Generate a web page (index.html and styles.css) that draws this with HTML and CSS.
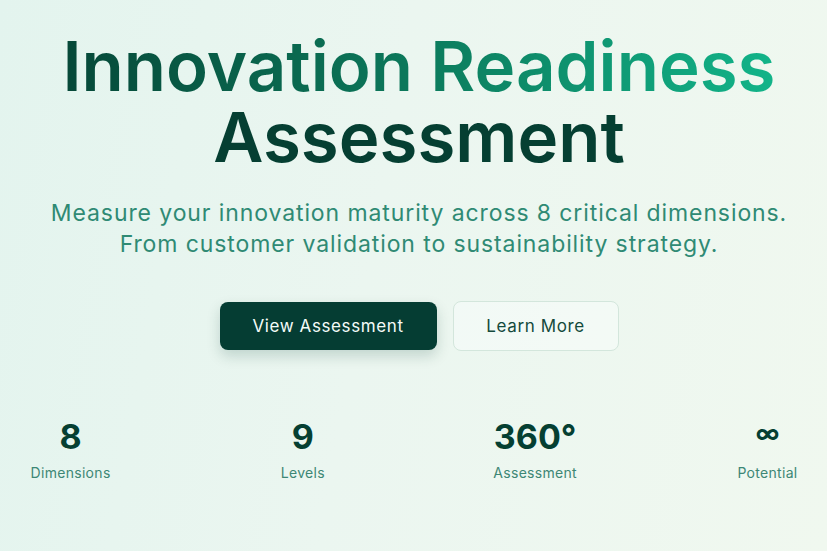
FILE: index.html
```html
<!DOCTYPE html>
<html lang="en">
<head>
<meta charset="utf-8">
<title>Innovation Readiness Assessment</title>
<link rel="stylesheet" href="styles.css">
</head>
<body>
<main class="hero">
  <h1 class="title">
    <span class="title-grad">Innovation Readiness</span>
    <span class="title-dark">Assessment</span>
  </h1>
  <p class="lead">Measure your innovation maturity across 8 critical dimensions.<br>From customer validation to sustainability strategy.</p>
  <div class="actions">
    <a class="btn btn-primary" href="#">View Assessment</a>
    <a class="btn btn-secondary" href="#">Learn More</a>
  </div>
  <div class="stats-wrap">
    <div class="stats">
      <div class="stat"><div class="stat-num">8</div><div class="stat-label">Dimensions</div></div>
      <div class="stat"><div class="stat-num">9</div><div class="stat-label">Levels</div></div>
      <div class="stat"><div class="stat-num">360°</div><div class="stat-label">Assessment</div></div>
      <div class="stat"><div class="stat-num stat-inf">∞</div><div class="stat-label">Potential</div></div>
    </div>
  </div>
</main>
</body>
</html>
```

FILE: styles.css
```css
* { box-sizing: border-box; }
html, body { margin: 0; padding: 0; }
body {
  width: 827px;
  height: 551px;
  overflow: hidden;
  font-family: Inter, "Liberation Sans", sans-serif;
  background: linear-gradient(100deg, #e3f4ee 0%, #ebf6f0 45%, #f0f8ef 100%);
}
.hero {
  display: flex;
  flex-direction: column;
  align-items: center;
  padding: 31px 0 0 11px;
  text-align: center;
}
.title {
  margin: 0;
  font-size: 69px;
  font-weight: 600;
  line-height: 71px;
  letter-spacing: 0;
  display: flex;
  flex-direction: column;
  align-items: center;
}
.title-grad {
  background: linear-gradient(90deg, #064838 0%, #0c7a5c 50%, #12b489 100%);
  -webkit-background-clip: text;
  background-clip: text;
  color: transparent;
}
.title-dark { color: #053f32; }
.lead {
  margin: 25px 0 0;
  font-size: 23px;
  line-height: 31px;
  letter-spacing: 0.9px;
  color: #2f8a74;
  font-weight: 400;
}
.actions {
  display: flex;
  gap: 16px;
  margin-top: 41px;
  align-items: center;
}
.btn {
  display: flex;
  align-items: center;
  justify-content: center;
  height: 48px;
  border-radius: 8px;
  font-size: 17px;
  letter-spacing: 0.6px;
  text-decoration: none;
}
.btn-primary {
  width: 217px;
  background: #053d33;
  color: #f4fbf8;
  box-shadow: 0 6px 14px rgba(5, 61, 51, 0.18);
}
.btn-secondary {
  width: 166px;
  height: 50px;
  background: rgba(245, 251, 248, 0.7);
  border: 1px solid #d3e6dc;
  color: #144a3c;
}
.stats-wrap {
  width: 100%;
  display: flex;
  justify-content: center;
  margin-top: 66px;
}
.stats {
  flex: none;
  display: grid;
  grid-template-columns: repeat(4, 120px);
  column-gap: 112.3px;
}
.stat {
  display: flex;
  flex-direction: column;
  align-items: center;
}
.stat-num {
  font-size: 34px;
  font-weight: 700;
  line-height: 40px;
  height: 40px;
  color: #053f32;
}
.stat-inf { font-size: 24px; line-height: 34px; }
.stat-label {
  margin-top: 7px;
  font-size: 14px;
  letter-spacing: 0.3px;
  color: #3d8775;
}
```
